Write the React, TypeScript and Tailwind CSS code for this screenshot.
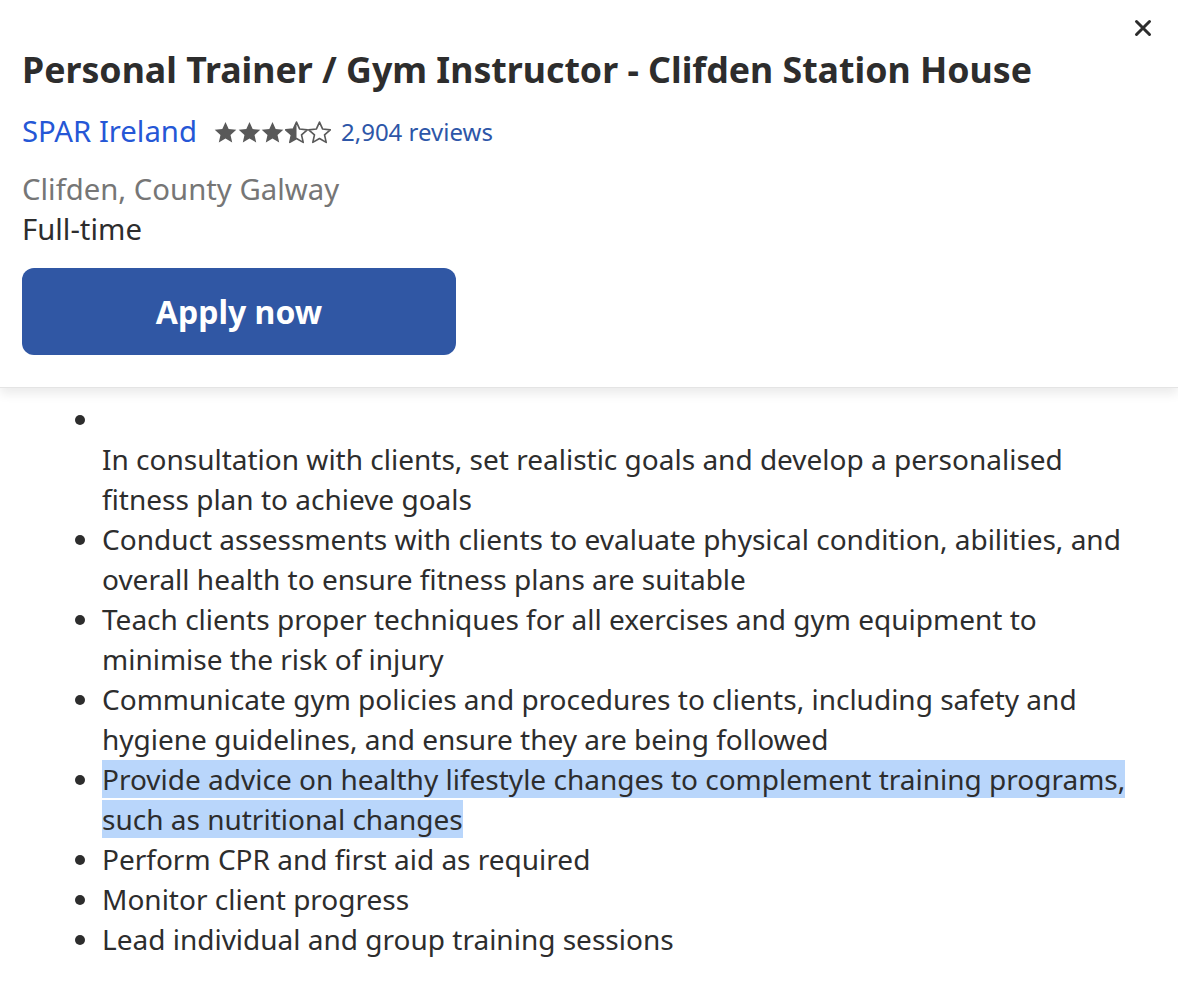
import React from "react";

const Star = ({ type }: { type: "full" | "half" | "empty" }) => {
  const d =
    "M12 0.6l3.3 7.3 7.95.8-6 5.35 1.75 7.8L12 17.8l-7 4.05 1.75-7.8-6-5.35 7.95-.8z";
  return (
    <svg width="23" height="23" viewBox="0 0 24 23">
      <defs>
        <clipPath id="halfclip">
          <rect x="0" y="0" width="12" height="24" />
        </clipPath>
      </defs>
      {type === "full" && <path d={d} fill="#595959" />}
      {type === "half" && (
        <>
          <path d={d} fill="none" stroke="#595959" strokeWidth="1.7" strokeLinejoin="round" />
          <path d={d} fill="#595959" clipPath="url(#halfclip)" />
        </>
      )}
      {type === "empty" && (
        <path d={d} fill="none" stroke="#595959" strokeWidth="1.7" strokeLinejoin="round" />
      )}
    </svg>
  );
};

const items: React.ReactNode[] = [
  "Conduct assessments with clients to evaluate physical condition, abilities, and overall health to ensure fitness plans are suitable",
  "Teach clients proper techniques for all exercises and gym equipment to minimise the risk of injury",
  "Communicate gym policies and procedures to clients, including safety and hygiene guidelines, and ensure they are being followed",
];

export default function App() {
  return (
    <div
      className="w-[1178px] h-[994px] bg-white overflow-hidden text-[#2d2d2d]"
      style={{ fontFamily: '"Noto Sans", "Open Sans", sans-serif' }}
    >
      <div className="relative bg-white pl-[22px] pt-[44px] pb-[32px] shadow-[0_6px_10px_rgba(0,0,0,0.08)] border-b border-[#e4e4e4] z-10">
        <button className="absolute top-[15px] right-[22px] w-[26px] h-[26px] flex items-center justify-center">
          <svg width="18" height="18" viewBox="0 0 18 18">
            <path d="M2.5 2.5l13 13M15.5 2.5l-13 13" stroke="#2d2d2d" strokeWidth="3" strokeLinecap="round" />
          </svg>
        </button>
        <h1 className="text-[35.7px] leading-[50px] font-bold">
          Personal Trainer / Gym Instructor - Clifden Station House
        </h1>
        <div className="flex items-center mt-[18px] h-[40px]">
          <span className="text-[29.3px] text-[#2557d6]">SPAR Ireland</span>
          <span className="flex items-center ml-[17px] gap-[0.5px]">
            <Star type="full" />
            <Star type="full" />
            <Star type="full" />
            <Star type="half" />
            <Star type="empty" />
          </span>
          <span className="ml-[10px] text-[24px] text-[#2d56a8]">2,904 reviews</span>
        </div>
        <div className="mt-[17px] text-[29.3px] leading-[40px] text-[#767676]">Clifden, County Galway</div>
        <div className="text-[29.3px] leading-[40px]">Full-time</div>
        <button className="mt-[19px] w-[434px] h-[87px] rounded-[12px] bg-[#3057a4] text-white text-[32px] font-bold">
          Apply now
        </button>
      </div>
      <ul className="list-disc pl-[102px] pt-[11px] text-[28px] leading-[40px] pr-[40px]">
        <li>
          <br />
          <p>In consultation with clients, set realistic goals and develop a personalised fitness plan to achieve goals</p>
        </li>
        {items.map((t, i) => (
          <li key={i}>{t}</li>
        ))}
        <li>
          <span className="bg-[#b9d6fb]">
            Provide advice on healthy lifestyle changes to complement training programs, such as nutritional changes
          </span>
        </li>
        <li>Perform CPR and first aid as required</li>
        <li>Monitor client progress</li>
        <li>Lead individual and group training sessions</li>
      </ul>
    </div>
  );
}
